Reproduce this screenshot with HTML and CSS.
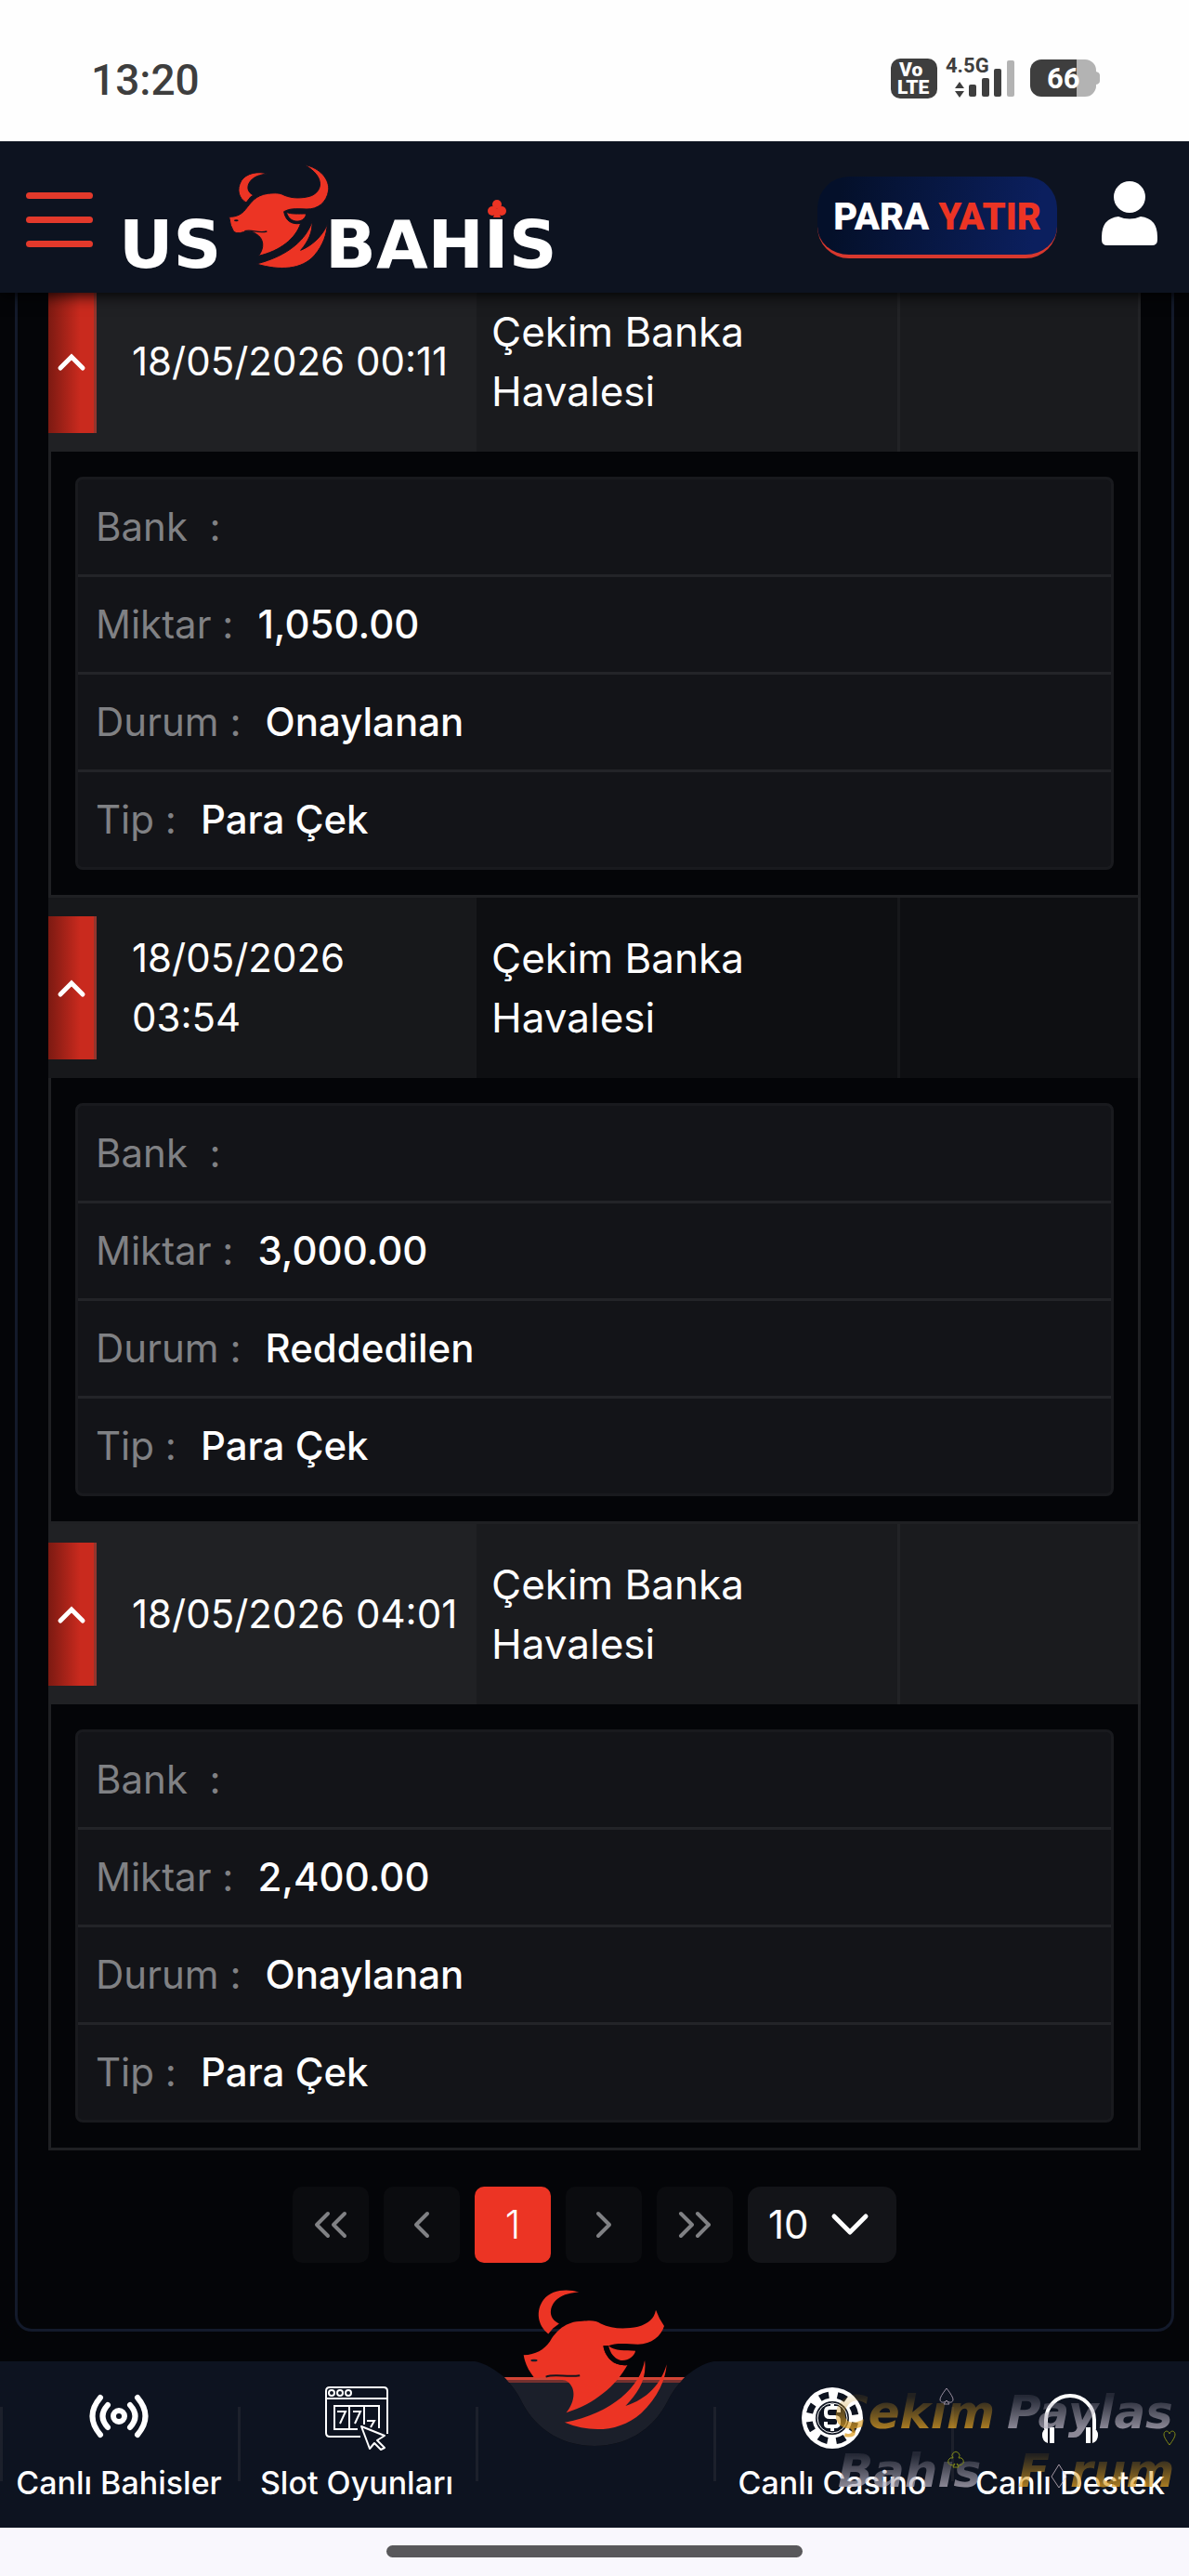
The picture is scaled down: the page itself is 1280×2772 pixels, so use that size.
FILE: index.html
```html
<!DOCTYPE html>
<html lang="tr">
<head>
<meta charset="utf-8">
<meta name="viewport" content="width=device-width, initial-scale=1">
<title>USBAHIS</title>
<link rel="stylesheet" href="styles.css">
</head>
<body>

<div class="statusbar">
	<span class="clock">13:20</span>
	<svg class="status-icons" width="226" height="48" viewBox="0 0 226 48">
		<rect x="1" y="3" width="50" height="43" rx="10" fill="#3e3e3e"/>
		<text x="10" y="22" class="st-volte">Vo</text>
		<text x="8" y="41" class="st-volte">LTE</text>
		<text x="60" y="18" class="st-net">4.5G</text>
		<path d="M75 28l5 7H70zM75 45l5-7H70z" fill="#3e3e3e"/>
		<rect x="85" y="31" width="8" height="13" rx="2" fill="#3e3e3e"/>
		<rect x="99" y="24" width="8" height="20" rx="2" fill="#3e3e3e"/>
		<rect x="112" y="14" width="8" height="30" rx="2" fill="#3e3e3e"/>
		<rect x="126" y="5" width="8" height="39" rx="2" fill="#b3b3b3"/>
		<path d="M201 4h9a12 12 0 0 1 12 13q4 1 4 4v6q0 3-4 4a12 12 0 0 1-12 13h-9z" fill="#b3b3b3"/>
		<path d="M201 4h-38a12 12 0 0 0-12 12v16a12 12 0 0 0 12 12h38z" fill="#3e3e3e"/>
		<text x="169" y="35" class="st-bat">66</text>
	</svg>
</div>

<header class="header">
	<button class="menu-btn" type="button" aria-label="Menü"><span></span><span></span><span></span></button>
	<a class="logo" href="#">
		<svg width="490" height="116" viewBox="0 0 490 116">
			<text x="-2" y="112" class="logo-text">US</text>
			<text x="220" y="112" class="logo-text">BAHIS</text>
			<g fill="#ec3424">
				<circle cx="405" cy="44" r="5"/><circle cx="400" cy="51" r="5"/><circle cx="410" cy="51" r="5"/>
				<path d="M404 49h2l3 9h-8z"/>
			</g>
			<svg x="115" y="0" width="110" height="115" viewBox="370 48 330 345">
				<g fill="#ec3424" stroke="#0d1320" stroke-width="3">
				<path d="M498 81C470 72 430 78 414 104C398 132 406 160 430 174L444 156L454 150C434 142 430 122 444 104C456 90 474 84 498 81Z"/>
				<path d="M375 220C400 220 415 212 428 196C445 175 460 150 500 145C525 142 540 143 552 150C580 162 610 160 635 154C675 142 690 92 618 52C670 62 700 100 696 135C690 175 660 196 625 195C600 194 580 193 566 197L552 203C556 230 575 247 606 241C590 290 540 330 470 346C490 320 488 290 462 275C445 262 425 268 410 272Q398 274 390 268Q378 250 375 220Z"/>
				<path d="M560 205C575 212 600 210 624 210C622 228 605 236 590 234C574 232 564 220 560 205Z"/>
				<path d="M643 235C625 290 570 345 463 372C540 395 610 390 650 345C680 310 690 275 692 244C680 275 650 310 606 328C630 300 645 270 643 235Z"/>
				</g>
				<ellipse cx="398" cy="232" rx="7" ry="3" fill="#0d1320"/>
				<path d="M425 266C450 259 465 274 497 267" fill="none" stroke="#0d1320" stroke-width="4"/>
			</svg>
		</svg>
	</a>
	<a class="deposit" href="#">PARA <b>YATIR</b></a>
	<a class="user" href="#" aria-label="Hesabım">
		<svg width="60" height="69" viewBox="0 0 60 69" fill="#fff"><circle cx="30" cy="17" r="17"/><path d="M18 38q12 5 24 0q18 2 18 22v3q0 6-6 6H6q-6 0-6-6v-3q0-20 18-22z"/></svg>
	</a>
</header>

<main class="panel">
	<table class="history">
		<colgroup><col class="c-date"><col class="c-type"><col class="c-info"></colgroup>
		<tbody>
		<tr class="odd">
			<td><div class="date"><button class="toggle" type="button" aria-label="Kapat"><svg width="30" height="20" viewBox="0 0 30 20"><path d="M3 17L15 5L27 17"/></svg></button><span>18/05/2026 00:11</span></div></td>
			<td class="type">Çekim Banka<br>Havalesi</td>
			<td class="info"></td>
		</tr>
		<tr>
			<td class="detail" colspan="3">
				<dl>
					<div><dt>Bank&nbsp; :</dt><dd></dd></div>
					<div><dt>Miktar :</dt><dd>1,050.00</dd></div>
					<div><dt>Durum :</dt><dd>Onaylanan</dd></div>
					<div><dt>Tip :</dt><dd>Para Çek</dd></div>
				</dl>
			</td>
		</tr>
		<tr class="even">
			<td><div class="date"><button class="toggle" type="button" aria-label="Kapat"><svg width="30" height="20" viewBox="0 0 30 20"><path d="M3 17L15 5L27 17"/></svg></button><span>18/05/2026<br>03:54</span></div></td>
			<td class="type">Çekim Banka<br>Havalesi</td>
			<td class="info"></td>
		</tr>
		<tr>
			<td class="detail" colspan="3">
				<dl>
					<div><dt>Bank&nbsp; :</dt><dd></dd></div>
					<div><dt>Miktar :</dt><dd>3,000.00</dd></div>
					<div><dt>Durum :</dt><dd>Reddedilen</dd></div>
					<div><dt>Tip :</dt><dd>Para Çek</dd></div>
				</dl>
			</td>
		</tr>
		<tr class="odd">
			<td><div class="date"><button class="toggle" type="button" aria-label="Kapat"><svg width="30" height="20" viewBox="0 0 30 20"><path d="M3 17L15 5L27 17"/></svg></button><span>18/05/2026 04:01</span></div></td>
			<td class="type">Çekim Banka<br>Havalesi</td>
			<td class="info"></td>
		</tr>
		<tr>
			<td class="detail" colspan="3">
				<dl>
					<div><dt>Bank&nbsp; :</dt><dd></dd></div>
					<div><dt>Miktar :</dt><dd>2,400.00</dd></div>
					<div><dt>Durum :</dt><dd>Onaylanan</dd></div>
					<div><dt>Tip :</dt><dd>Para Çek</dd></div>
				</dl>
			</td>
		</tr>
		</tbody>
	</table>

	<div class="pager">
		<button type="button" aria-label="İlk"><svg width="36" height="28" viewBox="0 0 36 28"><path d="M15 2L3 14L15 26M33 2L21 14L33 26"/></svg></button>
		<button type="button" aria-label="Önceki"><svg width="18" height="28" viewBox="0 0 18 28"><path d="M15 2L3 14L15 26"/></svg></button>
		<button type="button" class="active">1</button>
		<button type="button" aria-label="Sonraki"><svg width="18" height="28" viewBox="0 0 18 28"><path d="M3 2L15 14L3 26"/></svg></button>
		<button type="button" aria-label="Son"><svg width="36" height="28" viewBox="0 0 36 28"><path d="M3 2L15 14L3 26M21 2L33 14L21 26"/></svg></button>
		<div class="per-page">
			<select aria-label="Sayfa başına"><option>10</option><option>20</option><option>50</option></select>
			<svg width="40" height="24" viewBox="0 0 40 24"><path d="M3 3L20 20L37 3"/></svg>
		</div>
	</div>
</main>

<nav class="bottom-nav">
	<a href="#">
		<svg class="icon" width="68" height="68" viewBox="0 0 68 68" fill="none" stroke="#fff" stroke-linecap="round">
			<circle cx="34" cy="32" r="6" stroke-width="6"/>
			<path d="M22 20Q11 32 22 44M46 20Q57 32 46 44" stroke-width="6"/>
			<path d="M14 12Q-3 32 14 52M54 12Q71 32 54 52" stroke-width="6"/>
		</svg>
		<span>Canlı Bahisler</span>
	</a>
	<a href="#">
		<svg class="icon" width="68" height="68" viewBox="0 0 68 68" fill="none" stroke="#fff" stroke-width="2">
			<path d="M38 54H5q-4 0-4-4V5q0-4 4-4h58q4 0 4 4v46M1 13h66"/>
			<circle cx="7" cy="7" r="3"/><circle cx="16" cy="7" r="3"/><circle cx="25" cy="7" r="3"/>
			<path d="M35 46H10V21h48v24M26 21v25M42 21v20"/>
			<path d="M13 27h9l-6 13M30 27h8l-6 13M45 37h8l-4 7"/>
			<path d="M39 43l25 10-8 5 8 8-4 2-7-7-5 6z" stroke-linejoin="round" fill="#0d1320"/>
		</svg>
		<span>Slot Oyunları</span>
	</a>
	<a href="#" class="center" aria-label="Ana sayfa">
		<svg class="notch" width="272" height="192" viewBox="0 0 272 192">
			<path d="M0 99C18 100 30 110 39 117C51 130 55 138 59 146C75 175 103 191 136 191C169 191 197 175 213 146C217 138 221 130 233 117C242 110 254 100 272 99Z" fill="#040508"/>
			<path d="M39 117C51 130 55 138 59 146C75 175 103 191 136 191C169 191 197 175 213 146C217 138 221 130 233 117Z" fill="#1b1f2a"/>
			<path d="M39 117H233L228 123H44Z" fill="#74302f"/>
			<path d="M39 117H233L230 120H42Z" fill="#d24435"/>
			<svg x="58" y="21" width="158" height="155" viewBox="95 35 475 465">
				<g fill="#ec3424">
				<path d="M279 48C240 36 190 40 165 72C138 108 145 155 180 183L195 165L215 150C180 135 180 95 210 70C230 54 255 50 279 48Z"/>
				<path d="M100 252C140 250 165 235 185 208C205 175 235 142 290 142C320 139 335 140 350 150C385 168 430 168 470 160C505 150 522 135 528 106Q538 134 555 158C545 190 515 217 470 217C430 215 395 212 375 222L358 222C362 255 390 290 436 284C400 350 330 410 238 438C265 405 275 355 235 334L170 324L135 326C115 300 105 280 100 252Z"/>
				<path d="M492 268C480 350 390 440 233 470C320 505 410 500 480 440C535 390 560 330 563 282C545 345 500 395 430 416C470 375 500 330 492 268Z"/>
				</g>
				<path d="M358 222L375 222Q420 232 462 238L436 284C390 290 362 255 358 222Z" fill="#040508"/>
				<path d="M375 222C395 240 430 236 462 238C458 258 435 272 412 268C392 262 380 245 375 222Z" fill="#ec3424"/>
				<ellipse cx="134" cy="269" rx="11" ry="4" fill="#1b1f2a"/>
				<path d="M172 322C200 312 240 324 282 318" fill="none" stroke="#14151c" stroke-width="6"/>
			</svg>
		</svg>
	</a>
	<a href="#">
		<svg class="icon" width="68" height="68" viewBox="0 0 68 68">
			<circle cx="34" cy="34" r="33" fill="#fff"/>
			<circle cx="34" cy="34" r="25" fill="none" stroke="#0d1320" stroke-width="7" stroke-dasharray="10 9.63" stroke-dashoffset="-5"/>
			<circle cx="34" cy="34" r="20" fill="#fff"/>
			<circle cx="34" cy="34" r="18" fill="#0d1320"/>
			<circle cx="34" cy="34" r="16" fill="none" stroke="#fff" stroke-width="1"/>
			<path d="M41 28v-3q0-2-3-2h-7q-4 0-4 4v2q0 4 4 4h6q4 0 4 4v2q0 4-4 4h-7q-3 0-3-2v-3M34 19v4M34 43v5" fill="none" stroke="#fff" stroke-width="4"/>
		</svg>
		<span>Canlı Casino</span>
	</a>
	<a href="#">
		<svg class="icon" width="68" height="68" viewBox="0 0 68 68" fill="#fff">
			<path d="M8 46V36a26 26 0 0 1 52 0v10" fill="none" stroke="#fff" stroke-width="4"/>
			<path d="M10 44v17A9 9 0 0 1 10 44zM12 44h5v17h-5zM58 44v17a9 9 0 0 0 0-17zM51 44h5v17h-5z"/>
		</svg>
		<span>Canlı Destek</span>
	</a>
	<svg class="watermark" width="384" height="124" viewBox="0 0 384 124">
		<defs>
			<linearGradient id="gold" x1="0" y1="0" x2="0" y2="1"><stop offset="0.2" stop-color="#c8921f" stop-opacity=".15"/><stop offset=".8" stop-color="#e0a024"/></linearGradient>
			<linearGradient id="silver" x1="0" y1="0" x2="0" y2="1"><stop offset="0.2" stop-color="#a9a4b2" stop-opacity=".2"/><stop offset=".8" stop-color="#b5b0be"/></linearGradient>
		</defs>
		<text x="2" y="52" fill="url(#gold)">Çekım</text>
		<text x="188" y="52" fill="url(#silver)">Paylas</text>
		<text x="6" y="115" fill="url(#silver)">Bahıs</text>
		<text x="200" y="115" fill="url(#gold)">F</text>
		<text x="256" y="115" fill="url(#gold)">rum</text>
		<g fill="none" stroke-width="1">
			<path d="M123 9q-7 9-7 12c0 4 5 4 7 1c2 3 7 3 7-1q0-3-7-12zM123 22l-3 4h6z" stroke="#c9b9cc"/>
			<path d="M130 84a4 4 0 1 1 6 0a4 4 0 1 1-2 6l2 4h-6l2-4a4 4 0 1 1-2-6z" stroke="#a6b014"/>
			<path d="M363 70q-6-8-6-11c0-5 5-5 6-1c1-4 6-4 6 1q0 3-6 11z" stroke="#a6b014"/>
			<path d="M244 91l8 13-8 12-8-12z" stroke="#d4c3cf"/>
		</g>
	</svg>
</nav>

<div class="gesture"><span></span></div>

</body>
</html>
```
FILE: styles.css
```css
*{box-sizing:border-box;}
body{margin:0;background:#040508;color:#fff;font-family:Inter,"Open Sans",sans-serif;font-size:42px;line-height:64px;}
a{color:inherit;text-decoration:none;}
button,select{font:inherit;color:inherit;border:0;padding:0;margin:0;}
svg{display:block;overflow:visible;}

.statusbar{position:relative;z-index:3;height:152px;background:#fefefe;display:flex;align-items:center;justify-content:space-between;padding:16px 96px 0 98px;}
.clock{font-family:Roboto,sans-serif;font-size:46px;font-weight:500;color:#3e3e3e;padding-top:4px;}
.status-icons{font-family:Roboto,sans-serif;font-weight:700;}
.st-volte{font-size:21px;font-weight:900;fill:#fff;}
.st-net{font-size:22px;fill:#3e3e3e;}
.st-bat{font-size:31px;fill:#fff;}

.header{position:relative;z-index:2;height:163px;background:#0d1320;box-shadow:0 2px 16px #000;display:flex;align-items:center;padding:0 34px 0 28px;}
.menu-btn{background:none;width:72px;display:flex;flex-direction:column;gap:19px;padding-top:6px;}
.menu-btn span{height:7px;border-radius:4px;background:#e2392b;}
.logo{margin-left:30px;}
.logo-text{font-family:"DejaVu Sans",sans-serif;font-weight:700;font-size:72px;fill:#fff;}
.deposit{margin-left:auto;width:258px;height:88px;border-radius:34px;border-bottom:4px solid #d8382e;background:linear-gradient(100deg,#04102a 10%,#0b1f5e 90%);
	display:flex;align-items:center;justify-content:center;gap:10px;padding-top:4px;font-family:Roboto,sans-serif;font-weight:900;font-size:40px;}
.deposit b{font-weight:900;color:#ec3424;}
.user{margin-left:48px;padding-bottom:8px;}

.panel{margin:-23px 16px 32px;border:3px solid #131a2b;border-top:0;border-radius:0 0 18px 18px;padding:0 33px 71px;}
.history{width:100%;table-layout:fixed;border-collapse:separate;border-spacing:0;}
.history td{padding:0;height:194px;}
.c-date{width:461px;}
.c-type{width:453px;}
.odd td{background:#1a1b1e;}
.odd td:first-child{background:#202124;}
.even td{background:#0e0f12;}
.even td:first-child{background:#17181b;}
.date{display:flex;align-items:center;gap:38px;}
.toggle{flex:none;width:52px;height:154px;border-right:3px solid #93352d;background:linear-gradient(90deg,#7c1a12,#c92a1e 70%);}
.toggle svg{margin:0 auto;}
.toggle path{fill:none;stroke:#fff;stroke-width:5;stroke-linecap:round;}
.history .type{padding-left:16px;font-size:44px;}
.history .info{border-left:3px solid #222326;border-right:3px solid #222326;}
.history .even + tr td,.history .odd + tr td{background:none;}
.even .info{border-left-color:#17181b;}
.history .detail{height:auto;padding:27px 26px;border:3px solid #1f2023;border-top:0;}
.detail dl{margin:0;border:3px solid #191a1e;border-radius:8px;background:#131418;}
.detail dl div{display:flex;gap:26px;padding:19px;}
.detail dl div + div{border-top:3px solid #232428;}
.detail dt{color:#808184;}
.detail dd{margin:0;font-weight:500;}

.pager{display:flex;justify-content:center;gap:16px;margin-top:39px;}
.pager button{width:82px;height:82px;border-radius:10px;background:#0b0c0f;}
.pager button.active{background:#ec3424;font-weight:300;}
.pager button svg{margin:0 auto;}
.pager path{fill:none;stroke:#808184;stroke-width:4;stroke-linecap:round;stroke-linejoin:round;}
.per-page{position:relative;}
.per-page select{appearance:none;width:160px;height:82px;border-radius:14px;background:#131418;padding-left:22px;}
.per-page svg{position:absolute;right:30px;top:29px;pointer-events:none;}
.per-page path{stroke:#fff;stroke-width:5;}

.bottom-nav{position:relative;height:179px;background:#0d1320;display:grid;grid-template-columns:repeat(5,1fr);}
.bottom-nav a{position:relative;display:flex;flex-direction:column;align-items:center;gap:16px;padding-top:27px;font-size:34px;line-height:40px;font-weight:500;white-space:nowrap;}
.bottom-nav a:before{content:"";position:absolute;left:0;top:49px;width:3px;height:80px;background:#1c202b;}
.bottom-nav .notch{position:absolute;left:50%;top:-100px;margin-left:-136px;}
.watermark{position:absolute;right:0;top:20px;opacity:.75;pointer-events:none;font-family:"DejaVu Sans",sans-serif;font-style:italic;font-weight:700;font-size:50px;}

.gesture{height:52px;background:#f9f7fd;display:flex;align-items:center;justify-content:center;padding-bottom:2px;}
.gesture span{width:35%;height:13px;border-radius:7px;background:#59585b;}
```
